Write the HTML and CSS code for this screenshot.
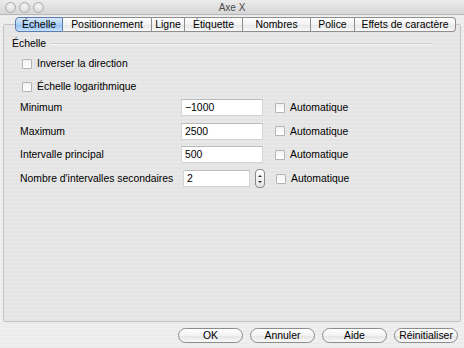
FILE: index.html
```html
<!DOCTYPE html>
<html lang="fr">
<head>
    <meta charset="UTF-8">
    <title>Axe X</title>
    <link rel="stylesheet" href="styles.css">
</head>
<body>
    <div class="window">
        <div class="titlebar">
            <div class="lights">
                <span class="light"></span>
                <span class="light"></span>
                <span class="light"></span>
            </div>
            <div class="title">Axe X</div>
        </div>

        <div class="tabs">
            <span class="tab active t-echelle">Échelle</span>
            <span class="tab t-pos">Positionnement</span>
            <span class="tab t-ligne">Ligne</span>
            <span class="tab t-etiq">Étiquette</span>
            <span class="tab t-nombres">Nombres</span>
            <span class="tab t-police">Police</span>
            <span class="tab t-effets">Effets de caractère</span>
        </div>

        <div class="panel">
            <div class="section">
                <span class="section-label">Échelle</span>
                <span class="section-line"></span>
            </div>
            <div class="checks">
                <label class="check-row"><span class="box"></span>Inverser la direction</label>
                <label class="check-row"><span class="box"></span>Échelle logarithmique</label>
            </div>

            <div class="field">
                <span class="field-label">Minimum</span>
                <span class="input">−1000</span>
                <label class="auto"><span class="box"></span>Automatique</label>
            </div>
            <div class="field">
                <span class="field-label">Maximum</span>
                <span class="input">2500</span>
                <label class="auto"><span class="box"></span>Automatique</label>
            </div>
            <div class="field">
                <span class="field-label">Intervalle principal</span>
                <span class="input">500</span>
                <label class="auto"><span class="box"></span>Automatique</label>
            </div>
            <div class="field">
                <span class="field-label">Nombre d'intervalles secondaires</span>
                <span class="input short">2</span>
                <span class="stepper"><i class="up"></i><i class="down"></i></span>
                <label class="auto"><span class="box"></span>Automatique</label>
            </div>
        </div>

        <div class="buttons">
            <button class="btn">OK</button>
            <button class="btn">Annuler</button>
            <button class="btn">Aide</button>
            <button class="btn reset">Réinitialiser</button>
        </div>
    </div>
</body>
</html>
```

FILE: styles.css
```css
html, body {
    margin: 0;
    padding: 0;
}
body {
    font-family: "Liberation Sans", Arial, sans-serif;
    font-size: 10.4px;
    color: #000;
    background: #ededed;
}
.window {
    width: 464px;
    height: 348px;
    overflow: hidden;
    background: repeating-linear-gradient(#efefef 0, #efefef 2px, #ebebeb 2px, #ebebeb 4px);
    display: flex;
    flex-direction: column;
}
.titlebar {
    height: 14px;
    flex: none;
    position: relative;
    background: linear-gradient(#ececec, #d6d6d6);
    border-bottom: 1px solid #b8b8b8;
    display: flex;
    align-items: center;
    justify-content: center;
}
.lights {
    position: absolute;
    left: 5px;
    top: 2px;
    display: flex;
    gap: 3px;
}
.light {
    width: 9px;
    height: 9px;
    border-radius: 50%;
    border: 1px solid #acacac;
    background: radial-gradient(circle at 50% 35%, #f6f6f6, #d2d2d2);
}
.title {
    font-size: 10px;
    color: #4a4a4a;
}
.tabs {
    display: flex;
    margin: 2px 0 -8px 15px;
    position: relative;
    z-index: 1;
    height: 15px;
}
.tab {
    height: 13px;
    line-height: 13px;
    text-align: center;
    border: 1px solid #8e8e8e;
    border-left: none;
    background: linear-gradient(#ffffff, #f2f2f2 50%, #e6e6e6 51%, #f8f8f8);
    white-space: nowrap;
    box-sizing: content-box;
}
.tab:last-child {
    border-radius: 0 4px 4px 0;
}
.tab.active {
    border: 1px solid #5d7bb0;
    border-radius: 4px 0 0 4px;
    background: linear-gradient(#d6e8fc, #acd0f5 50%, #90bdf0 51%, #c6e2fd);
}
.t-echelle { width: 46px; }
.t-pos { width: 88px; }
.t-ligne { width: 32px; }
.t-etiq { width: 57px; }
.t-nombres { width: 67px; }
.t-police { width: 43px; }
.t-effets { width: 100px; }
.panel {
    margin: 0 3px;
    height: 298px;
    border: 1px solid #c4c4c4;
    border-radius: 2px;
    background: repeating-linear-gradient(#e8e8e8 0, #e8e8e8 2px, #e4e4e4 2px, #e4e4e4 4px);
    padding: 12px 0 0 8px;
    box-sizing: border-box;
}
.section {
    display: flex;
    align-items: center;
    height: 13px;
    margin-right: 28px;
}
.section-label {
    margin-right: 4px;
}
.section-line {
    flex: 1;
    height: 1px;
    background: #cfcfcf;
    border-bottom: 1px solid #f4f4f4;
}
.checks {
    display: flex;
    flex-direction: column;
    gap: 10px;
    padding: 7px 0 6px 10px;
}
.box {
    width: 8px;
    height: 8px;
    border: 1px solid #b4b4b4;
    background: linear-gradient(#f2f2f2, #ffffff);
    border-radius: 1px;
    margin-right: 5px;
    flex: none;
}
.check-row {
    display: flex;
    align-items: center;
    height: 13px;
}
.field {
    display: flex;
    align-items: center;
    height: 17px;
    margin-bottom: 6.7px;
    padding-left: 8px;
}
.field-label {
    width: 161px;
    white-space: nowrap;
}
.input {
    width: 77px;
    height: 15px;
    line-height: 15px;
    padding-left: 3px;
    background: #fff;
    border: 1px solid #d4d4d4;
    border-top-color: #bababa;
    margin-right: 12px;
}
.input.short {
    width: 62px;
    margin-left: 2px;
    margin-right: 5px;
}
.stepper {
    width: 8px;
    height: 17px;
    border: 1px solid #8a8a8a;
    border-radius: 4px;
    background: linear-gradient(#ffffff, #e4e4e4);
    display: flex;
    flex-direction: column;
    align-items: center;
    justify-content: center;
    gap: 4px;
    margin-right: 11px;
}
.stepper i {
    width: 0;
    height: 0;
    border-left: 2px solid transparent;
    border-right: 2px solid transparent;
}
.stepper .up {
    border-bottom: 2px solid #333;
}
.stepper .down {
    border-top: 2px solid #333;
}
.auto {
    display: flex;
    align-items: center;
}
.buttons {
    display: flex;
    gap: 7px;
    justify-content: flex-end;
    padding: 6px 6px 0 0;
}
.btn {
    font-family: inherit;
    font-size: 10.4px;
    width: 65px;
    height: 15px;
    padding: 0;
    border: 1px solid #8c8c8c;
    border-radius: 8px;
    background: linear-gradient(#ffffff, #f2f2f2 50%, #e3e3e3 51%, #f8f8f8);
    color: #000;
    line-height: 13px;
}
.btn.reset {
    width: 64px;
}
```
